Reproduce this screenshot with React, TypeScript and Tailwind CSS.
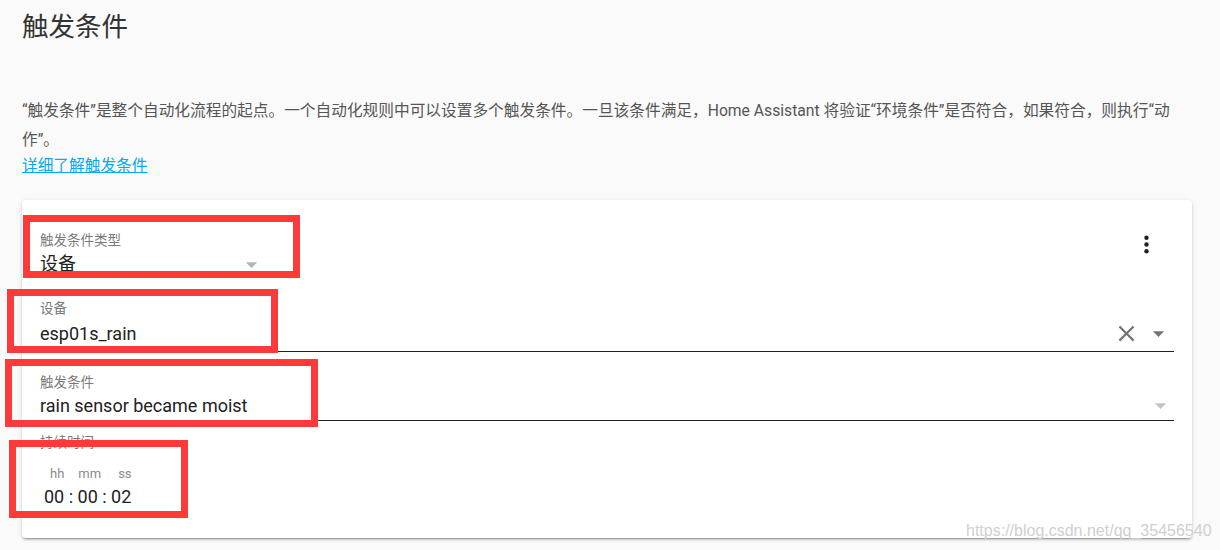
import React from 'react';

const FONT = { fontFamily: 'Roboto, "Noto Sans CJK SC", sans-serif' };

function ArrowDrop({ color }: { color: string }) {
  return (
    <svg width="27" height="27" viewBox="0 0 24 24" className="shrink-0">
      <path d="M7 10l5 5 5-5z" fill={color} />
    </svg>
  );
}

function CloseIcon() {
  return (
    <svg width="27" height="27" viewBox="0 0 24 24" className="shrink-0">
      <path
        d="M19 6.41L17.59 5 12 10.59 6.41 5 5 6.41 10.59 12 5 17.59 6.41 19 12 13.41 17.59 19 19 17.59 13.41 12z"
        fill="#737373"
      />
    </svg>
  );
}

function MoreIcon() {
  return (
    <svg width="27" height="27" viewBox="0 0 27 27" className="shrink-0">
      <circle cx="13.5" cy="6.8" r="2.2" fill="#212121" />
      <circle cx="13.5" cy="13.5" r="2.2" fill="#212121" />
      <circle cx="13.5" cy="20.2" r="2.2" fill="#212121" />
    </svg>
  );
}

// red annotation frames drawn over the screenshot
const MARKS = [
  { l: 23, t: 215, w: 277, h: 63 },
  { l: 7, t: 289, w: 271, h: 64 },
  { l: 5, t: 359, w: 313, h: 68 },
  { l: 9, t: 440, w: 179, h: 78 },
];

export default function App() {
  return (
    <div className="relative h-[550px] overflow-hidden bg-[#fafafa] pl-[22px] pr-[28px] pt-[11px]" style={FONT}>
      <h1 className="text-[26.5px] leading-[32px] font-normal text-[#333]">触发条件</h1>

      <p className="mt-[53px] text-[15.7px] leading-[29px] text-[#555]">
        “触发条件”是整个自动化流程的起点。一个自动化规则中可以设置多个触发条件。一旦该条件满足，Home Assistant 将验证“环境条件”是否符合，如果符合，则执行“动作”。
      </p>
      <a className="mt-[2px] block w-fit text-[15.7px] leading-[20px] text-[#03a9f4] underline">详细了解触发条件</a>

      <div className="mt-[24px] h-[338px] rounded-[4px] bg-white px-[18px] shadow-[0_2px_2px_0_rgba(0,0,0,0.14),0_1px_5px_0_rgba(0,0,0,0.12),0_3px_1px_-2px_rgba(0,0,0,0.2)]">
        {/* trigger type */}
        <div className="flex items-start pt-[32px]">
          <div className="w-[225px] border-b border-[#949494]">
            <div className="text-[13.5px] leading-[16px] text-[#7a7a7a]">触发条件类型</div>
            <div className="mt-[3px] flex h-[24px] items-center justify-between">
              <span className="text-[18px] text-[#212121]">设备</span>
              <span className="mt-[3px]">
                <ArrowDrop color="#b3b3b3" />
              </span>
            </div>
          </div>
          <div className="ml-auto -mt-px mr-[14px]">
            <MoreIcon />
          </div>
        </div>

        {/* device */}
        <div className="mt-[24px] border-b border-[#212121] pb-[6px]">
          <div className="text-[13.5px] leading-[16px] text-[#7a7a7a]">设备</div>
          <div className="mt-[5px] flex h-[24px] items-center">
            <span className="flex-1 text-[18px] text-[#212121]">esp01s_rain</span>
            <CloseIcon />
            <span className="ml-[5px] mr-[2px]">
              <ArrowDrop color="#757575" />
            </span>
          </div>
        </div>

        {/* trigger */}
        <div className="mt-[22px] border-b border-[#212121] pb-[3px]">
          <div className="text-[13.5px] leading-[16px] text-[#7a7a7a]">触发条件</div>
          <div className="mt-[3px] flex h-[24px] items-center">
            <span className="flex-1 text-[18px] text-[#212121]">rain sensor became moist</span>
            <ArrowDrop color="#c4c4c4" />
          </div>
        </div>

        {/* duration */}
        <div className="mt-[13px]">
          <div className="text-[13.5px] leading-[16px] text-[#7a7a7a]">持续时间</div>
          <div className="mt-[16px] flex text-[13px] leading-[16px] text-[#8a8a8a]">
            <span className="ml-[10px]">hh</span>
            <span className="ml-[14px]">mm</span>
            <span className="ml-[17px]">ss</span>
          </div>
          <div className="ml-[4px] mt-[3px] text-[18px] leading-[24px] text-[#212121]">00 : 00 : 02</div>
        </div>
      </div>

      {MARKS.map((m, i) => (
        <div
          key={i}
          className="absolute border-[7px] border-[#fc3a3a]"
          style={{ left: m.l, top: m.t, width: m.w, height: m.h }}
        />
      ))}

      <div
        className="absolute left-[966px] top-[521px] text-[16px] leading-[20px] text-[#cfcfcf]"
        style={{ fontFamily: '"Liberation Sans", Arial, sans-serif' }}
      >
        https://blog.csdn.net/qq_35456540
      </div>
    </div>
  );
}
